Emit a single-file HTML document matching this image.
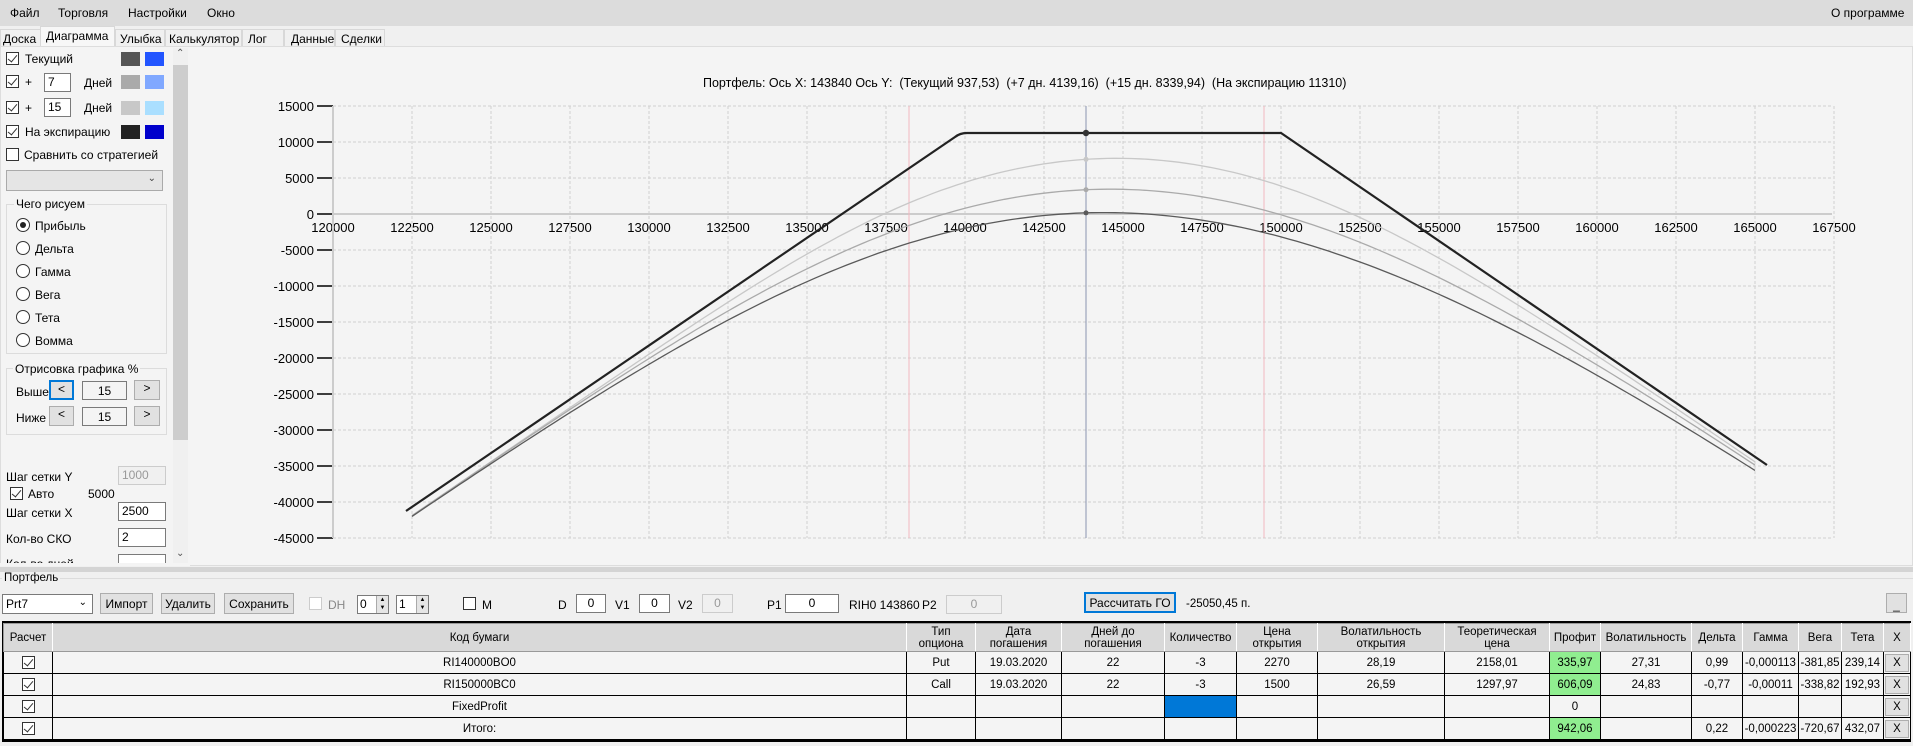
<!DOCTYPE html>
<html><head><meta charset="utf-8">
<style>
*{box-sizing:border-box;margin:0;padding:0}
body{width:1913px;height:746px;overflow:hidden;background:#f0f0f0;font-family:"Liberation Sans",sans-serif;font-size:12px;color:#000;position:relative}
.a{position:absolute;white-space:nowrap}
.cb{position:absolute;width:13px;height:13px;border:1px solid #333;background:#fff}
.cb.on::after{content:"";position:absolute;left:3px;top:0px;width:4px;height:8px;border:solid #333;border-width:0 1px 1px 0;transform:rotate(40deg)}
.rb{position:absolute;width:14px;height:14px;border:1px solid #333;border-radius:50%;background:#fff}
.rb.on::after{content:"";position:absolute;left:3px;top:3px;width:6px;height:6px;border-radius:50%;background:#222}
.in{position:absolute;border:1px solid #7a7a7a;background:#fff;padding:1px 3px;font-size:12px}
.btn{position:absolute;border:1px solid #adadad;background:#e1e1e1;text-align:center;font-size:12px}
.sw{position:absolute;width:19px;height:14px}
table{border-collapse:collapse;table-layout:fixed;font-size:11.5px}
td{border:1px solid #000;text-align:center;height:22px;background:#f4f4f4;overflow:hidden;white-space:nowrap}
tr.h td{background:#d9d9d9;height:28px;line-height:12px;border-color:#999 #fff #999 #999}
td.g{background:#90ee90}
td.x{padding:0}
td.x span{display:block;margin:1px;border:1px solid #adadad;background:#e1e1e1;height:18px;line-height:17px}
</style></head><body>
<!-- menu -->
<div class="a" style="left:0;top:0;width:1913px;height:26px;background:#dcdcdc"></div>
<div class="a" style="left:10px;top:6px">Файл</div>
<div class="a" style="left:58px;top:6px">Торговля</div>
<div class="a" style="left:128px;top:6px">Настройки</div>
<div class="a" style="left:207px;top:6px">Окно</div>
<div class="a" style="left:1831px;top:6px">О программе</div>
<!-- tabs -->
<div class="a" style="left:0;top:27px;width:385px;height:20px;border-bottom:1px solid #d8d8d8"></div>
<div class="a" style="left:0;top:29px;width:41px;height:18px;border:1px solid #d8d8d8;background:#f0f0f0;padding:2px 2px">Доска</div>
<div class="a" style="left:40px;top:26px;width:75px;height:21px;border:1px solid #d8d8d8;border-bottom:none;background:#f7f7f7;padding:2px 5px">Диаграмма</div>
<div class="a" style="left:115px;top:29px;width:50px;height:18px;border:1px solid #d8d8d8;padding:2px 4px">Улыбка</div>
<div class="a" style="left:165px;top:29px;width:77px;height:18px;border:1px solid #d8d8d8;padding:2px 3px">Калькулятор</div>
<div class="a" style="left:242px;top:29px;width:42px;height:18px;border:1px solid #d8d8d8;padding:2px 5px">Лог</div>
<div class="a" style="left:284px;top:29px;width:51px;height:18px;border:1px solid #d8d8d8;padding:2px 6px">Данные</div>
<div class="a" style="left:335px;top:29px;width:50px;height:18px;border:1px solid #d8d8d8;padding:2px 5px">Сделки</div>
<div class="a" style="left:0;top:46px;width:1913px;height:520px;background:#f4f4f4;border:1px solid #ddd"></div>
<!-- left panel -->
<div class="cb on" style="left:6px;top:52px"></div><div class="a" style="left:25px;top:52px">Текущий</div>
<div class="sw" style="left:121px;top:52px;background:#555"></div><div class="sw" style="left:145px;top:52px;background:#2255ff"></div>
<div class="cb on" style="left:6px;top:75px"></div><div class="a" style="left:25px;top:75px">+</div>
<div class="in" style="left:44px;top:73px;width:27px;height:19px">7</div><div class="a" style="left:84px;top:76px">Дней</div>
<div class="sw" style="left:121px;top:75px;background:#aaa"></div><div class="sw" style="left:145px;top:75px;background:#80a8ff"></div>
<div class="cb on" style="left:6px;top:101px"></div><div class="a" style="left:25px;top:101px">+</div>
<div class="in" style="left:44px;top:98px;width:27px;height:19px">15</div><div class="a" style="left:84px;top:101px">Дней</div>
<div class="sw" style="left:121px;top:101px;background:#c8c8c8"></div><div class="sw" style="left:145px;top:101px;background:#aadfff"></div>
<div class="cb on" style="left:6px;top:125px"></div><div class="a" style="left:25px;top:125px">На экспирацию</div>
<div class="sw" style="left:121px;top:125px;background:#222"></div><div class="sw" style="left:145px;top:125px;background:#0000cc"></div>
<div class="cb" style="left:6px;top:148px"></div><div class="a" style="left:24px;top:148px">Сравнить со стратегией</div>
<div class="a" style="left:6px;top:170px;width:157px;height:21px;border:1px solid #aaa;background:#e5e5e5"><span style="position:absolute;right:6px;top:2px;font-size:10px;color:#444">&#8964;</span></div>
<div class="a" style="left:6px;top:204px;width:161px;height:150px;border:1px solid #dcdcdc"></div>
<div class="a" style="left:14px;top:197px;background:#f4f4f4;padding:0 2px">Чего рисуем</div>
<div class="rb on" style="left:16px;top:218px"></div><div class="a" style="left:35px;top:219px">Прибыль</div>
<div class="rb" style="left:16px;top:241px"></div><div class="a" style="left:35px;top:242px">Дельта</div>
<div class="rb" style="left:16px;top:264px"></div><div class="a" style="left:35px;top:265px">Гамма</div>
<div class="rb" style="left:16px;top:287px"></div><div class="a" style="left:35px;top:288px">Вега</div>
<div class="rb" style="left:16px;top:310px"></div><div class="a" style="left:35px;top:311px">Тета</div>
<div class="rb" style="left:16px;top:333px"></div><div class="a" style="left:35px;top:334px">Вомма</div>
<div class="a" style="left:6px;top:368px;width:161px;height:67px;border:1px solid #dcdcdc"></div>
<div class="a" style="left:13px;top:362px;background:#f4f4f4;padding:0 2px">Отрисовка графика %</div>
<div class="a" style="left:16px;top:385px">Выше</div>
<div class="btn" style="left:49px;top:380px;width:25px;height:20px;border:2px solid #0078d7">&lt;</div>
<div class="a" style="left:82px;top:381px;width:45px;height:19px;border:1px solid #7a7a7a;text-align:center;padding-top:2px">15</div>
<div class="btn" style="left:134px;top:380px;width:26px;height:20px">&gt;</div>
<div class="a" style="left:16px;top:411px">Ниже</div>
<div class="btn" style="left:49px;top:406px;width:25px;height:20px">&lt;</div>
<div class="a" style="left:82px;top:407px;width:45px;height:19px;border:1px solid #7a7a7a;text-align:center;padding-top:2px">15</div>
<div class="btn" style="left:134px;top:406px;width:26px;height:20px">&gt;</div>
<div class="a" style="left:6px;top:470px">Шаг сетки Y</div>
<div class="in" style="left:118px;top:466px;width:48px;height:19px;color:#999;background:#f0f0f0;border-color:#ccc">1000</div>
<div class="cb on" style="left:10px;top:487px"></div><div class="a" style="left:28px;top:487px">Авто</div>
<div class="a" style="left:88px;top:487px">5000</div>
<div class="a" style="left:6px;top:506px">Шаг сетки X</div>
<div class="in" style="left:118px;top:502px;width:48px;height:19px">2500</div>
<div class="a" style="left:6px;top:532px">Кол-во СКО</div>
<div class="in" style="left:118px;top:528px;width:48px;height:19px">2</div>
<div class="a" style="left:6px;top:557px;height:6px;overflow:hidden">Кол-во дней</div>
<div class="in" style="left:118px;top:554px;width:48px;height:9px;border-bottom:none"></div>
<div class="a" style="left:0;top:563px;width:190px;height:3px;background:#f4f4f4"></div>
<!-- scrollbar -->
<div class="a" style="left:173px;top:48px;width:15px;height:515px;background:#f0f0f0"></div>
<div class="a" style="left:173px;top:65px;width:15px;height:375px;background:#cdcdcd"></div>
<div class="a" style="left:176px;top:48px;font-size:10px;color:#555">&#8963;</div>
<div class="a" style="left:176px;top:548px;font-size:10px;color:#555">&#8964;</div>
<!-- chart -->
<div class="a" style="left:703px;top:76px;font-size:12.5px">Портфель: Ось X: 143840 Ось Y: &nbsp;(Текущий 937,53) &nbsp;(+7 дн. 4139,16) &nbsp;(+15 дн. 8339,94) &nbsp;(На экспирацию 11310)</div>
<svg class="a" style="left:0;top:0" width="1913" height="746" id="ch" font-family="Liberation Sans, sans-serif" font-size="13"></svg>
<!-- splitter -->
<div class="a" style="left:0;top:567px;width:1913px;height:5px;background:#d4d4d4"></div>
<div class="a" style="left:0;top:578px;width:1913px;height:1px;background:#dcdcdc"></div>
<div class="a" style="left:2px;top:572px;background:#f0f0f0;padding:0 2px 0 2px;font-size:11.5px">Портфель</div>
<!-- toolbar -->
<div class="a" style="left:2px;top:594px;width:91px;height:20px;border:1px solid #7a7a7a;background:#fff;padding:2px 3px">Prt7<span style="position:absolute;right:5px;top:2px;font-size:10px">&#8964;</span></div>
<div class="btn" style="left:100px;top:593px;width:53px;height:21px;padding-top:3px">Импорт</div>
<div class="btn" style="left:161px;top:593px;width:54px;height:21px;padding-top:3px">Удалить</div>
<div class="btn" style="left:224px;top:593px;width:70px;height:21px;padding-top:3px">Сохранить</div>
<div class="cb" style="left:309px;top:597px;border-color:#ccc"></div><div class="a" style="left:328px;top:598px;color:#888">DH</div>
<div class="in" style="left:357px;top:595px;width:32px;height:19px;padding:1px 2px">0</div><div class="a" style="left:376px;top:596px;width:12px;height:17px;background:#e5e5e5;border-left:1px solid #aaa;font-size:6px;line-height:8px;text-align:center">▲<br>▼</div>
<div class="in" style="left:396px;top:595px;width:33px;height:19px;padding:1px 2px">1</div><div class="a" style="left:416px;top:596px;width:12px;height:17px;background:#e5e5e5;border-left:1px solid #aaa;font-size:6px;line-height:8px;text-align:center">▲<br>▼</div>
<div class="cb" style="left:463px;top:597px"></div><div class="a" style="left:482px;top:598px">M</div>
<div class="a" style="left:558px;top:598px">D</div><div class="in" style="left:576px;top:594px;width:30px;height:19px;text-align:center">0</div>
<div class="a" style="left:615px;top:598px">V1</div><div class="in" style="left:639px;top:594px;width:31px;height:19px;text-align:center">0</div>
<div class="a" style="left:678px;top:598px">V2</div><div class="in" style="left:702px;top:594px;width:31px;height:19px;text-align:center;border-color:#ccc;background:#f0f0f0;color:#999">0</div>
<div class="a" style="left:767px;top:598px">P1</div><div class="in" style="left:785px;top:594px;width:54px;height:19px;text-align:center">0</div>
<div class="a" style="left:849px;top:598px">RIH0 143860</div>
<div class="a" style="left:922px;top:598px">P2</div><div class="in" style="left:946px;top:595px;width:56px;height:19px;text-align:center;border-color:#ccc;background:#f0f0f0;color:#999">0</div>
<div class="btn" style="left:1084px;top:592px;width:92px;height:21px;border:2px solid #0078d7;padding-top:2px">Рассчитать ГО</div>
<div class="a" style="left:1186px;top:598px;font-size:11.5px">-25050,45 п.</div>
<div class="btn" style="left:1886px;top:593px;width:21px;height:20px;line-height:22px">_</div>
<!-- table -->
<div class="a" style="left:2px;top:621px;width:1909px;height:121px;border:2px solid #000;background:#f4f4f4"></div>
<table class="a" style="left:3px;top:623px;width:1907px">
<colgroup><col style="width:49px"><col style="width:854px"><col style="width:69px"><col style="width:86px"><col style="width:103px"><col style="width:72px"><col style="width:81px"><col style="width:127px"><col style="width:105px"><col style="width:51px"><col style="width:91px"><col style="width:51px"><col style="width:56px"><col style="width:43px"><col style="width:42px"><col style="width:27px"></colgroup>
<tr class="h"><td>Расчет</td><td>Код бумаги</td><td>Тип<br>опциона</td><td>Дата<br>погашения</td><td>Дней до<br>погашения</td><td>Количество</td><td>Цена<br>открытия</td><td>Волатильность<br>открытия</td><td>Теоретическая<br>цена</td><td>Профит</td><td>Волатильность</td><td>Дельта</td><td>Гамма</td><td>Вега</td><td>Тета</td><td>X</td></tr>
<tr><td><div class="cb on" style="position:relative;margin:auto"></div></td><td>RI140000BO0</td><td>Put</td><td>19.03.2020</td><td>22</td><td>-3</td><td>2270</td><td>28,19</td><td>2158,01</td><td class="g">335,97</td><td>27,31</td><td>0,99</td><td>-0,000113</td><td>-381,85</td><td>239,14</td><td class="x"><span>X</span></td></tr>
<tr><td><div class="cb on" style="position:relative;margin:auto"></div></td><td>RI150000BC0</td><td>Call</td><td>19.03.2020</td><td>22</td><td>-3</td><td>1500</td><td>26,59</td><td>1297,97</td><td class="g">606,09</td><td>24,83</td><td>-0,77</td><td>-0,00011</td><td>-338,82</td><td>192,93</td><td class="x"><span>X</span></td></tr>
<tr><td><div class="cb on" style="position:relative;margin:auto"></div></td><td>FixedProfit</td><td></td><td></td><td></td><td style="background:#0078d7"></td><td></td><td></td><td></td><td>0</td><td></td><td></td><td></td><td></td><td></td><td class="x"><span>X</span></td></tr>
<tr><td><div class="cb on" style="position:relative;margin:auto"></div></td><td>Итого:</td><td></td><td></td><td></td><td></td><td></td><td></td><td></td><td class="g">942,06</td><td></td><td>0,22</td><td>-0,000223</td><td>-720,67</td><td>432,07</td><td class="x"><span>X</span></td></tr>
</table>
<script>
(function(){
var s=document.getElementById('ch'),h='';
function X(v){return 333+(v-120000)/2500*79;}
function Y(v){return 214-v/5000*36;}
for(var v=120000;v<=167500;v+=2500){var x=X(v);h+='<line x1="'+x+'" y1="106" x2="'+x+'" y2="538" stroke="#d0d0d0" stroke-dasharray="3,2"/>';h+='<text x="'+x+'" y="232" text-anchor="middle">'+v+'</text>';}
for(var w=15000;w>=-45000;w-=5000){var y=Y(w);h+='<line x1="333" y1="'+y+'" x2="1832" y2="'+y+'" stroke="#d0d0d0" stroke-dasharray="3,2"/>';h+='<line x1="317" y1="'+y+'" x2="333" y2="'+y+'" stroke="#000" stroke-width="1.5"/>';h+='<text x="314" y="'+(y+5)+'" text-anchor="end">'+w+'</text>';}
h+='<line x1="333" y1="106" x2="333" y2="538" stroke="#ccc" stroke-width="2"/>';
h+='<line x1="333" y1="214" x2="1832" y2="214" stroke="#ccc" stroke-width="2"/>';
h+='<line x1="909" y1="106" x2="909" y2="538" stroke="#f2b8bf"/>';
h+='<line x1="1264" y1="106" x2="1264" y2="538" stroke="#f2b8bf"/>';
h+='<line x1="1086" y1="106" x2="1086" y2="538" stroke="#8a94b0"/>';
function phi(d){return Math.exp(-d*d/2)/Math.sqrt(2*Math.PI);}
function N(d){var t=1/(1+0.2316419*Math.abs(d)),p=1-phi(d)*t*(0.31938153+t*(-0.356563782+t*(1.781477937+t*(-1.821255978+t*1.330274429))));return d>=0?p:1-p;}
function f(S,tau){var sd=0.262*S*Math.sqrt(tau/365);var a=(140000-S)/sd,b=(S-150000)/sd;var P=(140000-S)*N(a)+sd*phi(a);var C=(S-150000)*N(b)+sd*phi(b);return 11310-3*(P+C);}
var cs=[[7,'#c8c8c8'],[15,'#aaaaaa'],[22,'#5a5a5a']];
cs.forEach(function(c){var d='';for(var S=122500;S<=165000;S+=250){d+=(S==122500?'M':'L')+X(S).toFixed(1)+','+(Y(f(S,c[0]))+5).toFixed(1);}h+='<path d="'+d+'" fill="none" stroke="'+c[1]+'" stroke-width="1.3"/>';h+='<circle cx="1086" cy="'+(Y(f(143840,c[0]))+5)+'" r="2.5" fill="'+c[1]+'"/>';});
h+='<path d="M406,511 L955,137 Q960,133 967,133 L1281,133 L1767,465" fill="none" stroke="#222" stroke-width="2.2"/>';
h+='<circle cx="1086" cy="133" r="3.2" fill="#333"/>';
s.innerHTML=h;
})();
</script>
</body></html>
